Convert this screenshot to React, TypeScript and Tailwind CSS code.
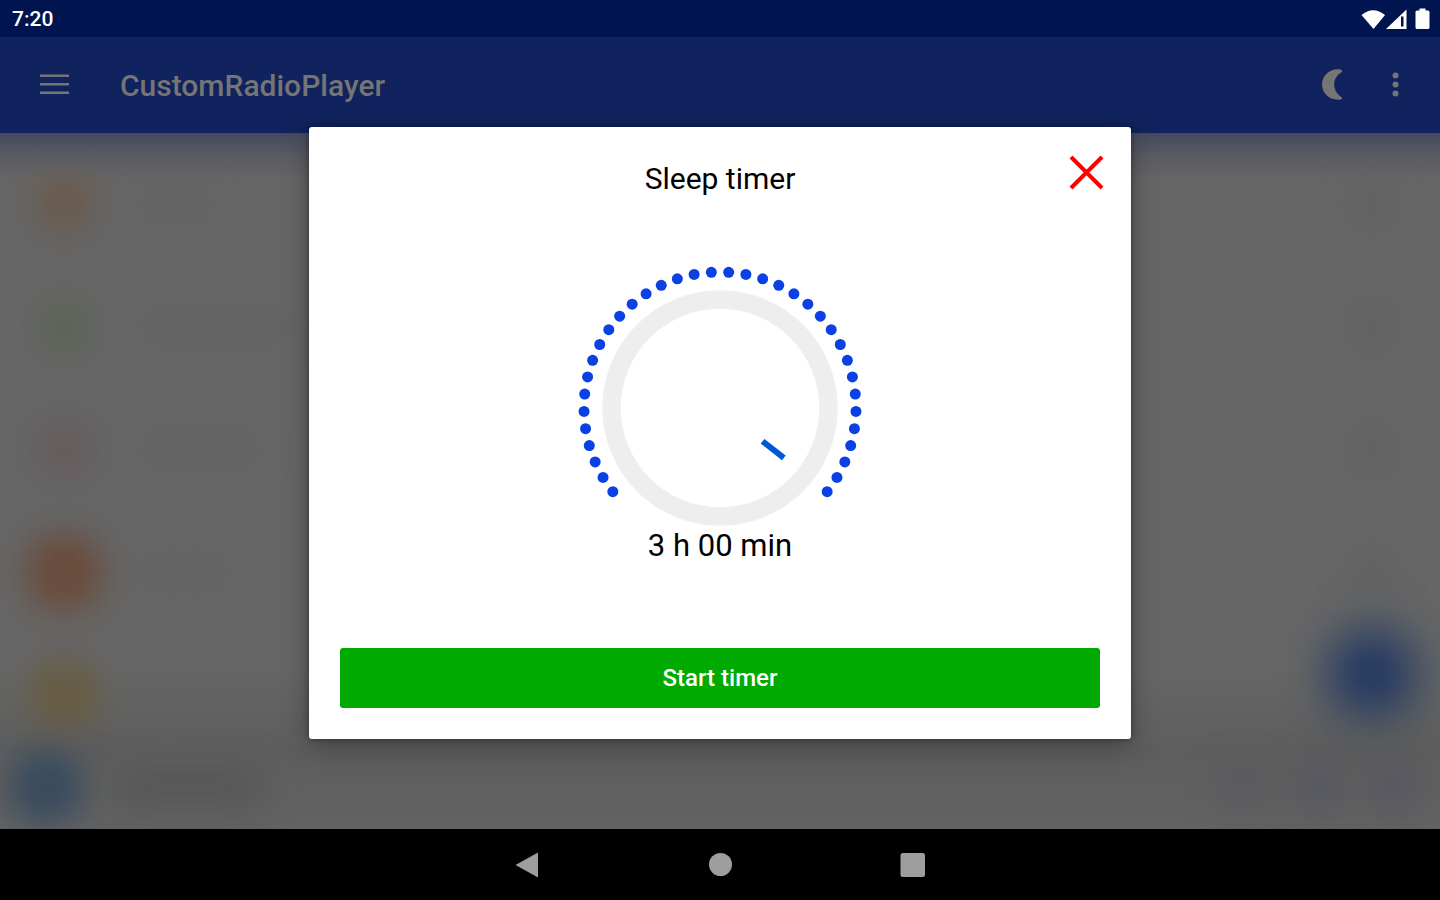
import React, { useState } from 'react';

interface Station {
  id: number;
  logo: string;
  title: string;
}

const stations: Station[] = [
  { id: 1, logo: 'size-14 bg-[#6b594a]', title: 'w-16' },
  { id: 2, logo: 'size-14 bg-[#5d6457]', title: 'w-36' },
  { id: 3, logo: 'size-14 bg-[#675a5c]', title: 'w-28' },
  { id: 4, logo: 'size-20 bg-[#6a4c3c]', title: 'w-20' },
  { id: 5, logo: 'size-18 bg-[#685c42]', title: 'w-32' },
];

const DOTS = 36;
const STEP = 5;
const SWEEP = 256;

// position on the dial, angle is measured clockwise from the top
const polar = (angle: number, radius: number) => {
  const rad = ((angle - 90) * Math.PI) / 180;
  return { x: 144 + radius * Math.cos(rad), y: 144 + radius * Math.sin(rad) };
};

const dotAngle = (index: number) => -SWEEP / 2 + (index * SWEEP) / (DOTS - 1);

const StatusBar = () => (
  <div className="flex h-[37px] shrink-0 items-center justify-between bg-[#00144f] pl-3 pr-2 pt-0.5 text-white">
    <span className="text-[21px] font-medium">7:20</span>
    <svg className="h-6 w-[72px]" viewBox="0 0 72 24" fill="currentColor">
      <path d="M1.500 7 Q13 -2.500 25 7 L13.500 21 Z" />
      <path d="M26 21 L46.500 1.500 V21 Z" />
      <path d="M41 8.500 H43.500 V18.500 H41 Z" fill="#00144f" />
      <path d="M59.500 0.500 H65.500 V2.500 H68 Q69.500 2.500 69.500 4 V19.500 Q69.500 21 68 21 H57 Q55.500 21 55.500 19.500 V4 Q55.500 2.500 57 2.500 H59.500 Z" />
    </svg>
  </div>
);

const Toolbar = () => (
  <header className="flex h-24 shrink-0 items-center bg-[#10235e] pl-10 pr-7 text-[#757575]">
    <button aria-label="Menu" className="mr-[51px]">
      <svg className="h-6 w-[29px]" viewBox="0 0 29 24" fill="currentColor">
        <path d="M0 1.500h29v2.500H0zM0 10h29v2.500H0zM0 18.500h29v2.500H0z" />
      </svg>
    </button>
    <h1 className="text-[30px] font-medium">CustomRadioPlayer</h1>
    <button aria-label="Sleep timer" className="ml-auto mr-9">
      <svg className="h-8 w-6" viewBox="0 0 24 32" fill="currentColor">
        <path d="M20.500 0.500 C9.500 -1 2 7 2 15.500 C2 24 9.500 32 20.500 30.500 C22.500 30 22.500 28.500 20.500 27.500 C12 21.500 12 9.500 20.500 4 C22.500 3 22.500 1 20.500 0.500 Z" />
      </svg>
    </button>
    <button aria-label="More options">
      <svg className="h-8 w-8" viewBox="0 0 32 32" fill="currentColor">
        <circle cx="15.500" cy="6.500" r="3" />
        <circle cx="15.500" cy="15.500" r="3" />
        <circle cx="15.500" cy="24.500" r="3" />
      </svg>
    </button>
  </header>
);

const StationList = () => (
  <div className="flex min-h-0 flex-1 flex-col" aria-hidden="true">
    <ul className="min-h-0 flex-1 pt-2 blur-lg">
      {stations.map((station) => (
        <li key={station.id} className="flex h-[123px] items-center pr-12">
          <div className="flex w-32 justify-center">
            <div className={`rounded-full ${station.logo}`} />
          </div>
          <div className={`ml-4 h-5 bg-[#626262] ${station.title}`} />
          <div className="ml-auto size-10 rounded-full bg-[#616161]" />
        </li>
      ))}
    </ul>
    <div className="flex h-[84px] items-center gap-8 pl-2 pr-6">
      <div className="size-19 rounded-full bg-[#384b5e] blur-lg" />
      <div className="h-10 w-36 bg-[#575757] blur-lg" />
      <div className="ml-auto size-11 rounded-full bg-[#595961] blur-lg" />
      <div className="size-11 rounded-full bg-[#555562] blur-lg" />
      <div className="size-11 rounded-full bg-[#555562] blur-lg" />
    </div>
  </div>
);

interface DialProps {
  value: number;
  onChange: (value: number) => void;
}

const TimerDial = ({ value, onChange }: DialProps) => {
  const active = value / STEP;
  const angle = dotAngle(active - 1);
  const from = polar(angle, 54);
  const to = polar(angle, 81);

  return (
    <div className="relative">
      <svg className="h-[264px] w-72" viewBox="0 0 288 264">
        <circle cx="144" cy="144" r="108.500" fill="none" stroke="#eeeeee" strokeWidth="18.500" />
        {Array.from({ length: DOTS }, (_, i) => {
          const { x, y } = polar(dotAngle(i), 136);
          return <circle key={i} cx={x} cy={y} r="5.500" fill={i < active ? '#0a40e4' : '#dddddd'} />;
        })}
        <line x1={from.x} y1={from.y} x2={to.x} y2={to.y} stroke="#0056d6" strokeWidth="6" />
      </svg>
      <input
        type="range"
        aria-label="Sleep timer duration"
        min={STEP}
        max={DOTS * STEP}
        step={STEP}
        value={value}
        onChange={(e) => onChange(Number(e.target.value))}
        className="absolute inset-0 h-full w-full cursor-pointer opacity-0"
      />
    </div>
  );
};

const SleepTimerDialog = () => {
  const [minutes, setMinutes] = useState(180);

  return (
    <div
      role="dialog"
      aria-labelledby="sleep-timer-title"
      className="flex w-4/7 flex-col rounded-[3px] bg-white text-black shadow-[0_8px_28px_rgba(0,0,0,0.3),0_0_6px_rgba(0,0,0,0.4)]"
    >
      <div className="grid grid-cols-[1fr_auto_1fr] items-start px-[26px] pt-[26px]">
        <h2 id="sleep-timer-title" className="col-start-2 mt-2 text-[30px] leading-9">
          Sleep timer
        </h2>
        <button aria-label="Close" className="justify-self-end text-[#ff0000]">
          <svg className="size-[38px]" viewBox="0 0 38 38" fill="none" stroke="currentColor" strokeWidth="4">
            <path d="M4 4 L35 35 M35 4 L4 35" />
          </svg>
        </button>
      </div>
      <div className="mt-[67px] flex flex-col items-center">
        <TimerDial value={minutes} onChange={setMinutes} />
        <output className="text-[31px] leading-9">
          {Math.floor(minutes / 60)} h {String(minutes % 60).padStart(2, '0')} min
        </output>
      </div>
      <div className="px-[31px] pb-[31px] pt-[84px]">
        <button className="h-[60px] w-full rounded-[3px] bg-[#00aa00] text-2xl font-medium text-white">
          Start timer
        </button>
      </div>
    </div>
  );
};

const NavigationBar = () => (
  <nav className="flex h-[71px] shrink-0 items-center justify-center gap-40 bg-black text-[#9e9e9e]">
    <button aria-label="Back">
      <svg className="size-8" viewBox="0 0 32 32" fill="currentColor">
        <path d="M3.500 16 L26 3.500 V28.500 Z" />
      </svg>
    </button>
    <button aria-label="Home">
      <svg className="size-8" viewBox="0 0 32 32" fill="currentColor">
        <circle cx="16.500" cy="15.500" r="11.500" />
      </svg>
    </button>
    <button aria-label="Recent apps">
      <svg className="size-8" viewBox="0 0 32 32" fill="currentColor">
        <rect x="4.500" y="4" width="24.500" height="24" rx="2.500" />
      </svg>
    </button>
  </nav>
);

export default function App() {
  return (
    <div className="flex h-screen flex-col overflow-hidden bg-black font-['Roboto',sans-serif]">
      <StatusBar />
      <div className="relative flex min-h-0 flex-1 flex-col">
        <Toolbar />
        <main className="relative flex min-h-0 flex-1 flex-col overflow-hidden bg-[#666666]">
          {/* soft edges below the toolbar and around the mini player */}
          <div className="absolute inset-x-0 top-0 h-12 bg-linear-to-b from-[#434a5c] via-[#5b5d64] to-transparent" />
          <div className="absolute inset-x-0 bottom-0 h-40 bg-linear-to-b from-transparent via-black/8 to-black/4" />
          <StationList />
          <div className="absolute bottom-28 right-6 size-22 rounded-full bg-[#1e3662] blur-xl" />
        </main>
        <div className="absolute inset-0 flex items-center justify-center">
          <SleepTimerDialog />
        </div>
      </div>
      <NavigationBar />
    </div>
  );
}
